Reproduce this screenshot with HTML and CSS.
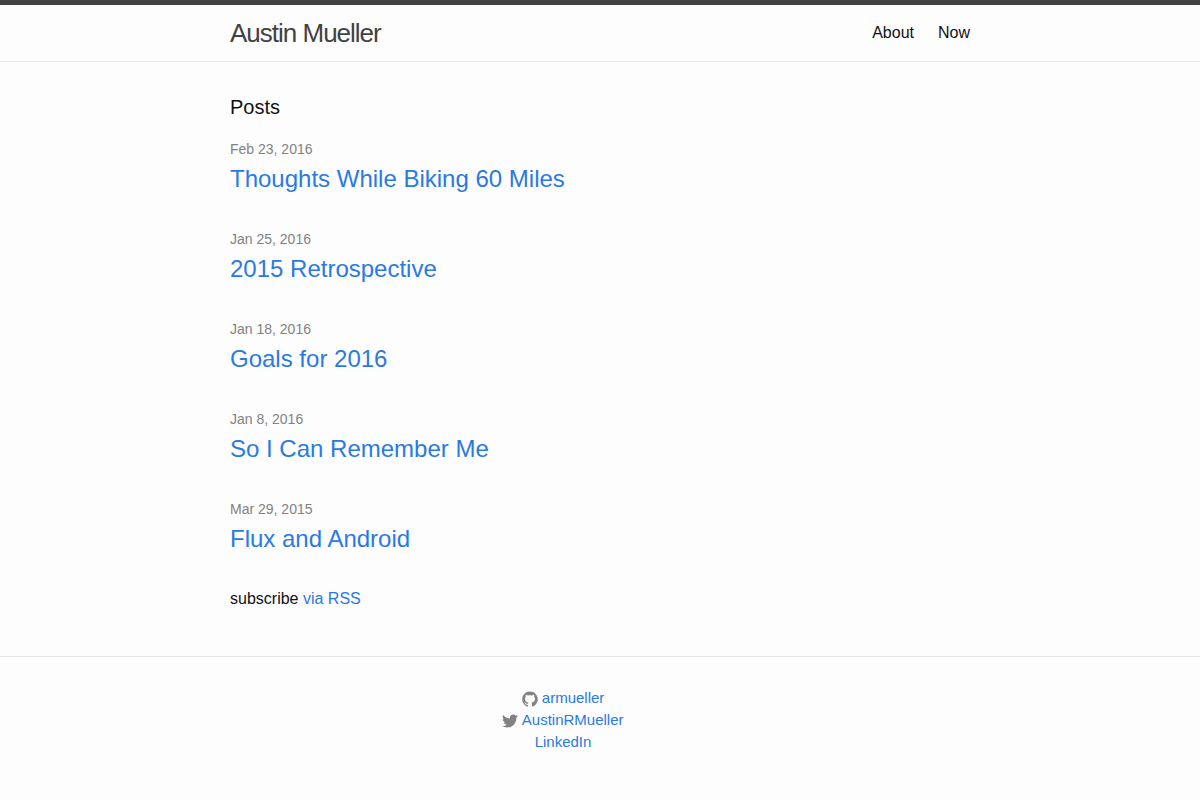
FILE: index.html
```html
<!DOCTYPE html>
<html lang="en">
<head>
<meta charset="utf-8">
<meta name="viewport" content="width=device-width, initial-scale=1">
<title>Austin Mueller</title>
<link rel="stylesheet" href="styles.css">
</head>
<body>
<header class="site-header">
  <div class="wrapper header-row">
    <a class="site-title" href="#">Austin Mueller</a>
    <nav class="site-nav">
      <a class="page-link" href="#">About</a>
      <a class="page-link" href="#">Now</a>
    </nav>
  </div>
</header>
<main class="page-content">
  <div class="wrapper">
    <h1 class="page-heading">Posts</h1>
    <ul class="post-list">
      <li><span class="post-meta">Feb 23, 2016</span><h2 class="post-title"><a class="post-link" href="#">Thoughts While Biking 60 Miles</a></h2></li>
      <li><span class="post-meta">Jan 25, 2016</span><h2 class="post-title"><a class="post-link" href="#">2015 Retrospective</a></h2></li>
      <li><span class="post-meta">Jan 18, 2016</span><h2 class="post-title"><a class="post-link" href="#">Goals for 2016</a></h2></li>
      <li><span class="post-meta">Jan 8, 2016</span><h2 class="post-title"><a class="post-link" href="#">So I Can Remember Me</a></h2></li>
      <li><span class="post-meta">Mar 29, 2015</span><h2 class="post-title"><a class="post-link" href="#">Flux and Android</a></h2></li>
    </ul>
    <p class="rss-subscribe">subscribe <a href="#">via RSS</a></p>
  </div>
</main>
<footer class="site-footer">
  <div class="wrapper">
    <ul class="social-list">
      <li><a href="#"><svg class="icon" viewBox="0 0 16 16" aria-hidden="true"><path d="M7.999,0.431c-4.285,0-7.76,3.474-7.76,7.761 c0,3.428,2.223,6.337,5.307,7.363c0.388,0.071,0.53-0.168,0.53-0.374c0-0.184-0.007-0.672-0.01-1.32 c-2.159,0.469-2.614-1.04-2.614-1.04c-0.353-0.896-0.862-1.135-0.862-1.135c-0.705-0.481,0.053-0.472,0.053-0.472 c0.779,0.055,1.189,0.8,1.189,0.8c0.692,1.186,1.816,0.843,2.258,0.645c0.071-0.502,0.271-0.843,0.493-1.037 C4.86,11.425,3.049,10.76,3.049,7.786c0-0.847,0.302-1.54,0.799-2.082C3.768,5.507,3.501,4.718,3.924,3.65 c0,0,0.652-0.209,2.134,0.796C6.677,4.273,7.34,4.187,8,4.184c0.659,0.003,1.323,0.089,1.943,0.261 c1.482-1.004,2.132-0.796,2.132-0.796c0.423,1.068,0.157,1.857,0.077,2.054c0.497,0.542,0.798,1.235,0.798,2.082 c0,2.981-1.814,3.637-3.543,3.829c0.279,0.24,0.527,0.713,0.527,1.437c0,1.037-0.01,1.874-0.01,2.129 c0,0.208,0.14,0.449,0.534,0.373c3.081-1.028,5.302-3.935,5.302-7.362C15.76,3.906,12.285,0.431,7.999,0.431z"/></svg> <span>armueller</span></a></li>
      <li><a href="#"><svg class="icon" viewBox="0 0 16 16" aria-hidden="true"><path d="M15.969,3.058c-0.586,0.26-1.217,0.436-1.878,0.515c0.675-0.405,1.194-1.045,1.438-1.809c-0.632,0.375-1.332,0.647-2.076,0.793c-0.596-0.636-1.446-1.033-2.387-1.033c-1.806,0-3.27,1.464-3.27,3.27 c0,0.256,0.029,0.506,0.085,0.745C5.163,5.404,2.753,4.102,1.14,2.124C0.859,2.607,0.698,3.168,0.698,3.767 c0,1.134,0.577,2.135,1.455,2.722C1.616,6.472,1.112,6.325,0.671,6.08c0,0.014,0,0.027,0,0.041c0,1.584,1.127,2.906,2.623,3.206 C3.02,9.402,2.731,9.442,2.433,9.442c-0.211,0-0.416-0.021-0.615-0.059c0.416,1.299,1.624,2.245,3.055,2.271 c-1.119,0.877-2.529,1.4-4.061,1.4c-0.264,0-0.524-0.015-0.78-0.046c1.447,0.928,3.166,1.469,5.013,1.469 c6.015,0,9.304-4.983,9.304-9.304c0-0.142-0.003-0.283-0.009-0.423C14.976,4.29,15.531,3.714,15.969,3.058z"/></svg> <span>AustinRMueller</span></a></li>
      <li><a href="#">LinkedIn</a></li>
    </ul>
  </div>
</footer>
</body>
</html>
```
FILE: styles.css
```css
* {
  box-sizing: border-box;
}

body,
h1,
h2,
p,
ul {
  margin: 0;
  padding: 0;
  font-weight: 400;
}

body {
  color: #111;
  background: #fdfdfd;
  font: 16px/24px "Liberation Sans", Arial, sans-serif;
}

ul {
  list-style: none;
}

a {
  color: #2a7ae2;
  text-decoration: none;
}

a:hover {
  color: #111;
  text-decoration: underline;
}

.wrapper {
  max-width: 800px;
  margin: 0 auto;
  padding: 0 30px;
}

.site-header {
  border-top: 5px solid #424242;
  border-bottom: 1px solid #e8e8e8;
}

.header-row {
  display: flex;
  justify-content: space-between;
}

.site-title {
  color: #424242;
  font-size: 26px;
  line-height: 56px;
  letter-spacing: -1px;
}

.site-nav {
  display: flex;
  gap: 24px;
  line-height: 56px;
}

.page-link {
  color: #111;
}

.page-content {
  padding: 30px 0;
}

.page-heading {
  font-size: 20px;
  line-height: 30px;
}

.post-list {
  display: grid;
  gap: 30px;
  padding: 15px 0 30px;
}

.post-meta {
  display: block;
  color: #828282;
  font-size: 14px;
}

.post-title {
  font-size: 24px;
  line-height: 36px;
}

.rss-subscribe {
  padding-bottom: 15px;
}

.site-footer {
  border-top: 1px solid #e8e8e8;
  padding: 30px 0;
}

.social-list {
  width: 90%;
  font-size: 15px;
  line-height: 22px;
  text-align: center;
}

.icon {
  width: 16px;
  height: 16px;
  fill: #828282;
  vertical-align: middle;
}
```
